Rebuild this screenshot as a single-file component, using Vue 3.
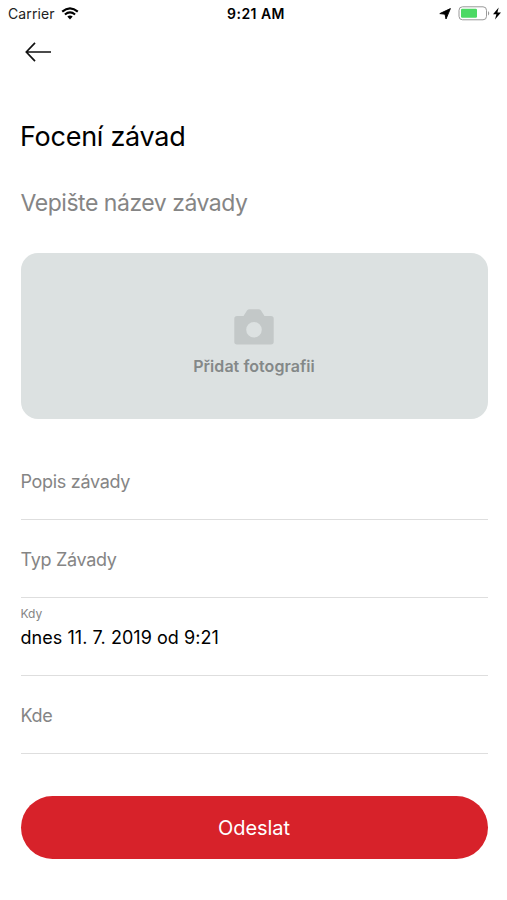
<script setup>
import { ref } from 'vue'
const fields = ref([
  { label: 'Popis závady' },
  { label: 'Typ Závady' },
  { label: 'Kdy', value: 'dnes 11. 7. 2019 od 9:21' },
  { label: 'Kde' },
])
</script>

<template>
  <main class="screen">
    <header class="status">
      <div class="carrier">
        <span class="carrier-name">Carrier</span>
        <svg class="wifi" width="18" height="13" viewBox="0 0 18 13">
          <path d="M1.2 4.6Q9-2 16.8 4.6M3.9 7.5Q9 3.3 14.1 7.5" fill="none" stroke="#000" stroke-width="2.1" />
          <path d="M6.3 9.6Q9 7.4 11.7 9.6L9 12.4Z" />
        </svg>
      </div>
      <span class="time">9:21 AM</span>
      <div class="indicators">
        <svg class="location" width="12" height="12" viewBox="0 0 12 12"><path d="M11.4.6 7 11 6 6.2 .8 5.6Z" stroke="#000" stroke-width=".9" stroke-linejoin="round" /></svg>
        <svg class="battery" width="33" height="15" viewBox="0 0 33 15">
          <rect x="1" y=".8" width="27.5" height="13" rx="3.5" fill="#fff" stroke="#999" />
          <rect x="3" y="2.8" width="16" height="9" rx="1.2" fill="#4cd964" />
          <path d="M30 5q2.5 2.3 0 4.6z" fill="#999" />
        </svg>
        <svg class="bolt" width="8" height="13" viewBox="0 0 8 13"><path d="M5.7 .5 0 7.3h3.4L2 12.5l6-7H4.4Z" /></svg>
      </div>
    </header>
    <nav class="nav">
      <svg width="28" height="20" viewBox="0 0 28 20"><path d="M11 .8 2.3 10 11 19.2M2 10H27" fill="none" stroke="#111" stroke-width="1.7" /></svg>
    </nav>
    <h1 class="title"><span>Focení závad</span></h1>
    <div class="name"><span>Vepište název závady</span></div>
    <button class="photo">
      <svg width="40" height="36" viewBox="0 0 40 36"><path fill-rule="evenodd" d="M3 7h6.5L13 1.6Q14 .2 15.5 .2h9Q26 .2 27 1.6L30.5 7H37q2.7 0 2.7 2.7v23.1q0 2.7-2.7 2.7H3Q.3 35.5.3 32.8V9.7Q.3 7 3 7Zm17 6a7.8 7.8 0 1 0 0 15.6A7.8 7.8 0 0 0 20 13Z" fill="#c3c8c8" /></svg>
      <span class="photo-label">Přidat fotografii</span>
    </button>
    <section class="fields">
      <div v-for="f in fields" :key="f.label" class="field" :class="{ filled: f.value }">
        <span class="label">{{ f.label }}</span>
        <span v-if="f.value" class="value">{{ f.value }}</span>
      </div>
    </section>
    <button class="submit"><span>Odeslat</span></button>
  </main>
</template>

<style>
body { margin: 0; background: #fff; }
</style>
<style scoped>
.screen { box-sizing: border-box; width: 507px; height: 900px; font-family: Inter, sans-serif; color: #000; background: #fff; overflow: hidden; }
.status { display: grid; grid-template-columns: 1fr auto 1fr; align-items: center; height: 27px; padding: 0 6px 0 8px; }
.carrier, .indicators { display: flex; align-items: center; }
.carrier { gap: 6px; font-size: 14px; letter-spacing: .1px; color: #222; }
.time { padding-left: 3px; font-size: 14px; font-weight: 600; letter-spacing: .45px; }
.indicators { justify-content: flex-end; }
.battery { margin-left: 7px; }
.bolt { margin-left: 2px; }
.nav { display: flex; align-items: center; height: 49px; padding-left: 24px; }
.title { margin: 39px 0 0 20px; font-size: 27px; line-height: 44px; font-weight: 400; letter-spacing: -.27px; white-space: nowrap; }
.name { margin: 22px 0 0 20.6px; font-size: 23px; line-height: 44px; letter-spacing: -.48px; color: #858585; white-space: nowrap; }
button { display: flex; align-items: center; justify-content: center; margin: 0 19.5px 0 20.5px; width: 467px; padding: 0; border: 0; font-family: inherit; }
.photo { flex-direction: column; height: 166px; margin-top: 28px; border-radius: 17px; background: #dce1e1; gap: 10px; padding-top: 13px; }
.photo-label { font-size: 16px; line-height: 22px; font-weight: 600; letter-spacing: .05px; color: #848888; }
.fields { margin: 23px 19.5px 0 20.5px; }
.field { box-sizing: border-box; display: flex; flex-direction: column; justify-content: center; height: 78.1px; padding-top: 2px; border-bottom: 1px solid #dedede; }
.label { font-size: 18px; line-height: 24px; letter-spacing: -.31px; color: #858585; }
.value { font-size: 18px; line-height: 24px; letter-spacing: .05px; }
.filled { justify-content: flex-start; padding-top: 7px; }
.filled .label { font-size: 12px; line-height: 18px; letter-spacing: 0; }
.filled .value { margin-top: 3px; }
.submit { height: 63px; margin-top: 41.6px; padding-top: 1px; border-radius: 32px; background: #d7222a; color: #fff; font-size: 20px; letter-spacing: -.05px; }
</style>
